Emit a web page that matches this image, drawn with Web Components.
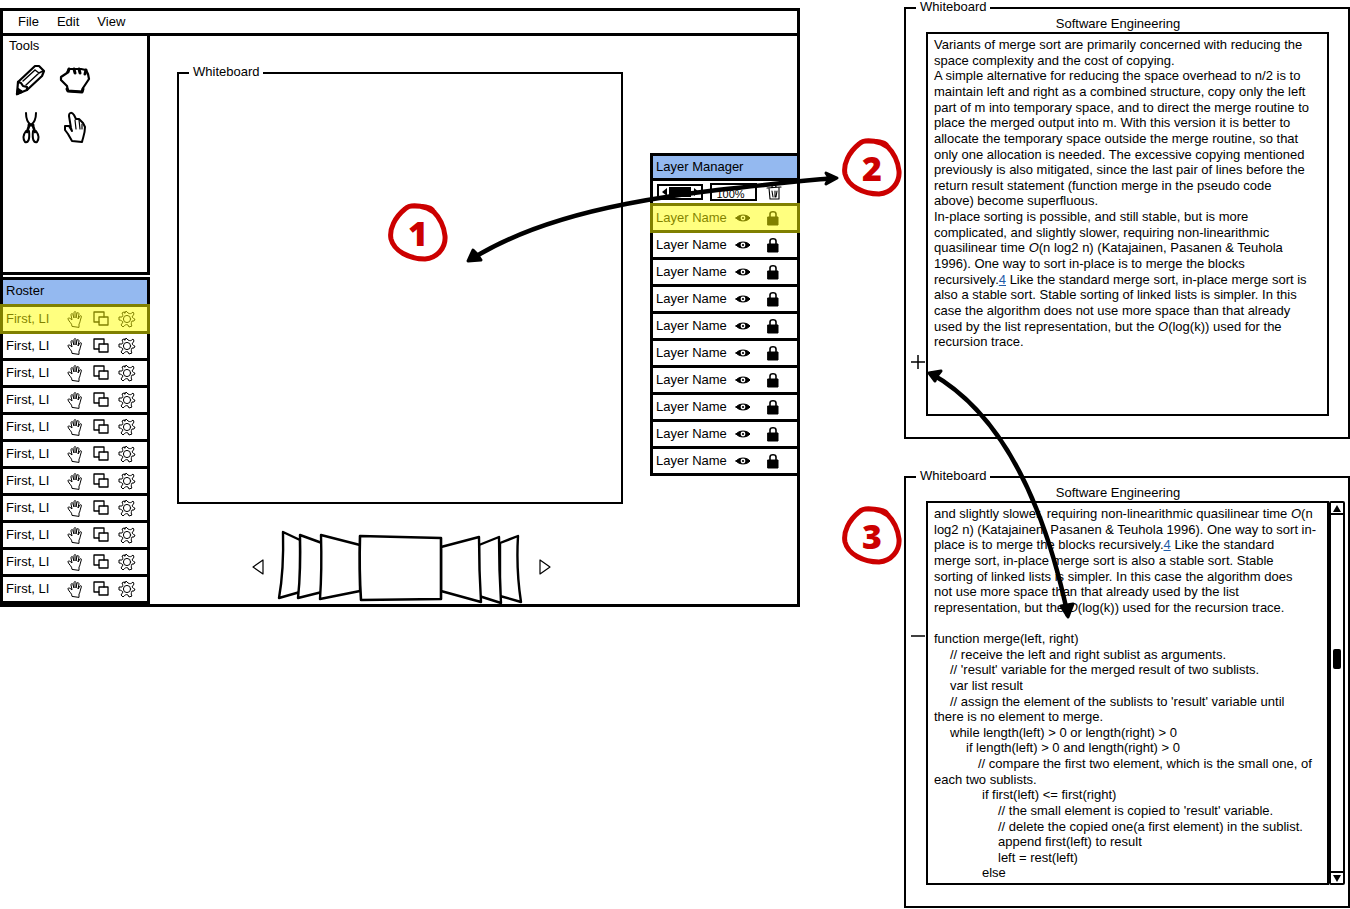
<!DOCTYPE html>
<html lang="en">
<head>
<meta charset="utf-8">
<title>Whiteboard wireframe</title>
<style>
  body { margin: 0; background: #fff; color: #000; font: 13px/16px "Liberation Sans", sans-serif; }
  a { color: #1f5ba8; }
</style>
</head>
<body>
<wire-page>
  <app-window slot="app"></app-window>
  <white-board slot="boards">
    <board-document>
      <text-lines rows="20">
        <span>Variants of merge sort are primarily concerned with reducing the</span>
        <span>space complexity and the cost of copying.</span>
        <span>A simple alternative for reducing the space overhead to n/2 is to</span>
        <span>maintain left and right as a combined structure, copy only the left</span>
        <span>part of m into temporary space, and to direct the merge routine to</span>
        <span>place the merged output into m. With this version it is better to</span>
        <span>allocate the temporary space outside the merge routine, so that</span>
        <span>only one allocation is needed. The excessive copying mentioned</span>
        <span>previously is also mitigated, since the last pair of lines before the</span>
        <span>return result statement (function merge in the pseudo code</span>
        <span>above) become superfluous.</span>
        <span>In-place sorting is possible, and still stable, but is more</span>
        <span>complicated, and slightly slower, requiring non-linearithmic</span>
        <span>quasilinear time <i>O</i>(n log2 n) (Katajainen, Pasanen &amp; Teuhola</span>
        <span>1996). One way to sort in-place is to merge the blocks</span>
        <span>recursively.<a href="#note-4">4</a> Like the standard merge sort, in-place merge sort is</span>
        <span>also a stable sort. Stable sorting of linked lists is simpler. In this</span>
        <span>case the algorithm does not use more space than that already</span>
        <span>used by the list representation, but the <i>O</i>(log(k)) used for the</span>
        <span>recursion trace.</span>
      </text-lines>
    </board-document>
  </white-board>
  <white-board slot="boards">
    <board-document expanded>
      <text-lines rows="24">
        <span>and slightly slower, requiring non-linearithmic quasilinear time <i>O</i>(n</span>
        <span>log2 n) (Katajainen, Pasanen &amp; Teuhola 1996). One way to sort in-</span>
        <span>place is to merge the blocks recursively.<a href="#note-4">4</a> Like the standard</span>
        <span>merge sort, in-place merge sort is also a stable sort. Stable</span>
        <span>sorting of linked lists is simpler. In this case the algorithm does</span>
        <span>not use more space than that already used by the list</span>
        <span>representation, but the <i>O</i>(log(k)) used for the recursion trace.</span>
        <span></span>
        <span>function merge(left, right)</span>
        <span class="in1">// receive the left and right sublist as arguments.</span>
        <span class="in1">// 'result' variable for the merged result of two sublists.</span>
        <span class="in1">var list result</span>
        <span class="in1">// assign the element of the sublists to 'result' variable until</span>
        <span>there is no element to merge.</span>
        <span class="in1">while length(left) &gt; 0 or length(right) &gt; 0</span>
        <span class="in2">if length(left) &gt; 0 and length(right) &gt; 0</span>
        <span class="in3">// compare the first two element, which is the small one, of</span>
        <span>each two sublists.</span>
        <span class="in4">if first(left) &lt;= first(right)</span>
        <span class="in5">// the small element is copied to 'result' variable.</span>
        <span class="in5">// delete the copied one(a first element) in the sublist.</span>
        <span class="in5">append first(left) to result</span>
        <span class="in5">left = rest(left)</span>
        <span class="in4">else</span>
      </text-lines>
    </board-document>
  </white-board>
</wire-page>

<script>
const S = (w, h, body, sw = 2) =>
  `<svg width="${w}" height="${h}" viewBox="0 0 ${w} ${h}" fill="none" stroke="currentColor" stroke-width="${sw}" stroke-linejoin="round" stroke-linecap="round" aria-hidden="true">${body}</svg>`;

const ICONS = {
  pencil: S(30, 32, '<path d="M1 30L2 18L19 2L23 2L28 7L26 12L11 26Z"/><path d="M2 18L5 19L7 22L11 23L11 26M1 30L5 27"/><path d="M7 17L19 6M10 21L23 9M19 6L23 9L27 7" stroke-width="1.4"/><path d="M1 30L2 25L6 28Z" fill="currentColor"/>', 2.2),
  grab: S(32, 30, '<path d="M2 12L8 8L10 4L22 4L27 5L29 9L30 14L24 23L23 27L9 26L8 21L2 15Z"/><path d="M10 4L9 7M15 4L16 8M20 4L21 8M27 5L26 9" stroke-width="3"/><path d="M8 24L9 26L23 27L24 24" stroke-width="3"/>', 2.2),
  scissors: S(20, 32, '<path d="M5 1C5 8 7 11 10 13C14 10 15 6 15 1" stroke-width="2"/><path d="M8 13L12 13" stroke-width="3"/><path d="M5 19C2 23 2 27 4 30C7 31 9 28 8 19ZM15 19C18 23 18 27 16 30C13 31 11 28 12 19Z"/><path d="M8 14L6 20M12 14L14 20" stroke-width="2.6"/>', 2),
  point: S(24, 34, '<path d="M8 17L6 5C6 1 9 1 11 4L13 8L16 8L20 12L22 16C22 23 20 26 19 31L9 30L5 23L2 19L2 15L6 15L9 20Z"/><path d="M12 9L13 18M16 9L17 18M19 13L19 18" stroke-width="1.2"/>', 2),
  hand: S(16, 18, '<path d="M5 16C5 13 2 12 1 9C1 7 3 8 5 10L4 5C4 3 6 3 6 5L7 8L7 3C7 1 9 1 9 3L9 8L10 3C11 2 12 3 12 4L11 9L13 6C14 5 15 6 14 8C13 11 13 13 12 14L12 17Z"/>', 1),
  copy: S(16, 16, '<path d="M6 11H1V1H11V6"/><path d="M6 6H15V14H6Z"/>', 1.3),
  gear: S(18, 18, '<circle cx="9" cy="9" r="3.6"/><path d="M7 3L8 1L10 3C12 4 13 4 15 2L16 4L14 7C15 8 16 9 17 9L16 11L14 11C13 13 13 15 14 16L11 17L10 15C8 14 7 15 5 17L3 15L5 12C4 11 3 10 1 10L1 7L4 7C5 6 5 5 4 3L6 2Z"/>', 1),
  eye: S(16, 10, '<path d="M1 5C4 1 12 1 15 5C12 9 4 9 1 5Z" fill="currentColor"/><circle cx="8" cy="5" r="2.4" fill="#fff" stroke="none"/><circle cx="8" cy="5" r="1.1" fill="currentColor" stroke="none"/>', 1),
  lock: S(12, 16, '<path d="M3 8V4C3 1 9 1 9 4V8" stroke-width="1.6"/><path d="M1 7H11V15H1Z" fill="currentColor"/>', 1),
  trash: S(16, 18, '<path d="M1 5L15 4M6 4C6 1 10 1 10 4M3 5L4 16H13L13 5M6 8L7 14M9 8V14M11 8L10 14"/>', 1.1),
  prev: S(14, 16, '<path d="M13 1V15L3 8Z"/>', 1.2),
  next: S(14, 16, '<path d="M4 1V15L14 8Z"/>', 1.2)
};

function define(name, html, setup) {
  const template = document.createElement('template');
  template.innerHTML = html;
  customElements.define(name, class extends HTMLElement {
    constructor() {
      super();
      this.attachShadow({ mode: 'open' }).append(template.content.cloneNode(true));
    }
    connectedCallback() { if (setup) setup(this, this.shadowRoot); }
  });
}

const BUTTON = 'button{all:unset;box-sizing:border-box;display:flex;align-items:center;justify-content:center;cursor:pointer}button:focus-visible{outline:1px solid #36c}svg{display:block;overflow:visible}';

define('wire-icon', '<style>:host{display:block}svg{display:block;overflow:visible}</style><div></div>',
  (el, root) => { root.querySelector('div').innerHTML = ICONS[el.getAttribute('name')]; });

define('menu-bar', `<style>${BUTTON}
  :host{display:block;border-bottom:3px solid #000}
  nav{display:flex;gap:18px;padding:0 15px;height:22px}</style>
  <nav><button>File</button><button>Edit</button><button>View</button></nav>`);

define('tool-box', `<style>${BUTTON}
  :host{display:block;box-sizing:border-box;min-height:239px;padding:0 6px;border-bottom:3px solid #000;border-right:3px solid #000}
  h2{margin:0;font:inherit;line-height:20px}
  div{display:grid;grid-template-columns:44px 44px;grid-auto-rows:48px}</style>
  <h2>Tools</h2>
  <div>
    <button aria-label="Pencil"><wire-icon name="pencil"></wire-icon></button>
    <button aria-label="Grab"><wire-icon name="grab"></wire-icon></button>
    <button aria-label="Cut"><wire-icon name="scissors"></wire-icon></button>
    <button aria-label="Point"><wire-icon name="point"></wire-icon></button>
  </div>`);

define('panel-head', `<style>
  :host{display:block;background:#94b9f0;border-top:3px solid #000;border-bottom:3px solid #000;padding:0 3px;line-height:22px}</style><slot></slot>`);

define('list-row', `<style>
  :host{display:flex;align-items:center;height:24px;padding-left:3px;border-bottom:3px solid #000;position:relative}
  .label{flex:1;white-space:nowrap}
  :host([selected])::after{content:"";position:absolute;inset:-3px -3px -3px -3px;background:rgba(255,255,0,.5)}</style>
  <span class="label"><slot></slot></span><slot name="actions"></slot>`);

define('roster-list', `<style>${BUTTON}
  :host{display:block;border-right:3px solid #000}
  panel-head{padding-bottom:2px}
  button{width:26px;height:24px}
  button:last-of-type{margin-right:7px}</style>
  <panel-head>Roster</panel-head><div></div>`,
  (el, root) => {
    const row = i => `<list-row${i ? '' : ' selected'}>First, LI
      <button slot="actions" aria-label="Raise hand"><wire-icon name="hand"></wire-icon></button>
      <button slot="actions" aria-label="Copy"><wire-icon name="copy"></wire-icon></button>
      <button slot="actions" aria-label="Settings"><wire-icon name="gear"></wire-icon></button></list-row>`;
    root.querySelector('div').innerHTML = Array.from({ length: 11 }, (_, i) => row(i)).join('');
  });

define('layer-manager', `<style>${BUTTON}
  :host{display:block;border-left:3px solid #000}
  list-row button{width:30px;height:24px}
  list-row button:last-of-type{margin-right:9px}
  .bar{display:flex;align-items:center;gap:7px;height:22px;padding-left:4px;border-bottom:3px solid #000}
  .slider{display:flex;box-sizing:border-box;width:46px;height:16px;border:2px solid #000}
  .slider button{width:10px}
  .slider i{flex:1;margin:1px 0;background:#000}
  input{box-sizing:border-box;width:47px;height:18px;margin:0;padding:3px 6px 0 0;border:2px solid #000;background:#fff;color:#000;font:11px/11px "Liberation Sans",sans-serif;text-align:center}
  .bin{margin-left:2px}</style>
  <panel-head>Layer Manager</panel-head>
  <div class="bar">
    <span class="slider"><button aria-label="Less"><svg width="5" height="8"><path d="M5 0V8L0 4Z"/></svg></button><i></i><button aria-label="More"><svg width="5" height="8"><path d="M0 0V8L5 4Z"/></svg></button></span>
    <input value="100%" aria-label="Zoom">
    <button class="bin" aria-label="Delete layer"><wire-icon name="trash"></wire-icon></button>
  </div>
  <div class="rows"></div>`,
  (el, root) => {
    const row = i => `<list-row${i ? '' : ' selected'}>Layer Name
      <button slot="actions" aria-label="Visibility"><wire-icon name="eye"></wire-icon></button>
      <button slot="actions" aria-label="Lock"><wire-icon name="lock"></wire-icon></button></list-row>`;
    root.querySelector('.rows').innerHTML = Array.from({ length: 10 }, (_, i) => row(i)).join('');
  });

define('white-board', `<style>
  :host{display:block}
  fieldset{box-sizing:border-box;min-width:0;min-height:439px;margin:0;padding:0;border:2px solid #000}
  legend{margin-left:10px;padding:0 4px 2px;line-height:14px}</style>
  <fieldset><legend>Whiteboard</legend><slot></slot></fieldset>`);

define('page-carousel', `<style>${BUTTON}
  :host{display:flex;justify-content:center;align-items:center;gap:12px}
  button{width:14px;height:16px}</style>
  <button aria-label="Previous"><wire-icon name="prev"></wire-icon></button>
  <svg width="248" height="74" viewBox="276 530 248 74" fill="#fff" stroke="#000" stroke-width="2.4" stroke-linejoin="round">
    <path d="M283 532L300 540V592L279 598Q284 570 283 532Z"/>
    <path d="M300 535L322 543V592L298 598Q301 570 300 535Z"/>
    <path d="M321 535L360 545V591L320 599Q322 570 321 535Z"/>
    <path d="M518 536L500 543V596L521 602Q516 570 518 536Z"/>
    <path d="M499 537L479 545V596L501 603Q499 570 499 537Z"/>
    <path d="M479 537L441 547V591L481 602Q479 570 479 537Z"/>
    <path d="M360 536L441 538V599L361 600Q359 570 360 536Z" stroke-width="2.6"/>
  </svg>
  <button aria-label="Next"><wire-icon name="next"></wire-icon></button>`);

define('app-window', `<style>
  :host{display:block;border:3px solid #000;margin-top:8px}
  .work{display:grid;grid-template-columns:147px minmax(0,1fr) 147px;align-items:start}
  .side{display:grid;gap:2px}
  .stage{align-self:stretch;display:flex;flex-direction:column;justify-content:space-between;padding:29px 27px 0}
  layer-manager{margin-top:117px}</style>
  <menu-bar></menu-bar>
  <div class="work">
    <div class="side"><tool-box></tool-box><roster-list></roster-list></div>
    <div class="stage"><white-board></white-board><page-carousel></page-carousel></div>
    <layer-manager></layer-manager>
  </div>`);

define('text-lines', `<style>
  :host{display:grid;grid-auto-rows:1fr;min-height:313px;line-height:15px;white-space:nowrap}
  :host([rows="24"]){min-height:375px}
  ::slotted(.in1){padding-left:16px}
  ::slotted(.in2){padding-left:32px}
  ::slotted(.in3){padding-left:44px}
  ::slotted(.in4){padding-left:48px}
  ::slotted(.in5){padding-left:64px}</style><slot></slot>`);

define('scroll-bar', `<style>${BUTTON}
  :host{display:flex;flex-direction:column;box-sizing:border-box;width:16px;border:2px solid #000;border-radius:2px}
  button{height:10px}
  .track{flex:1;border:solid #000;border-width:2px 0}
  .thumb{width:8px;height:20px;margin:134px auto 0;background:#000;border-radius:2px}</style>
  <button aria-label="Scroll up"><svg width="8" height="7"><path d="M0 7H8L4 0Z"/></svg></button>
  <div class="track"><div class="thumb"></div></div>
  <button aria-label="Scroll down"><svg width="8" height="7"><path d="M0 0H8L4 7Z"/></svg></button>`);

define('board-document', `<style>${BUTTON}
  :host{display:grid;grid-template-columns:20px minmax(0,1fr) 19px;padding-bottom:21px}
  h2{grid-column:1/-1;margin:0;padding-right:18px;font:inherit;line-height:16px;text-align:center}
  .toggle{align-self:start;width:16px;height:16px;margin:322px 0 0 4px}
  .page{box-sizing:border-box;min-height:384px;border:2px solid #000;padding:3px 6px 2px}
  scroll-bar{display:none}
  :host([expanded]) scroll-bar{display:flex}
  :host([expanded]) .toggle{margin-top:127px}
  :host([expanded]) .v{display:none}</style>
  <h2>Software Engineering</h2>
  <button class="toggle" aria-label="Toggle section"><svg width="14" height="14" stroke="#000" stroke-width="1.5"><path d="M0 7H14"/><path class="v" d="M7 0V14"/></svg></button>
  <div class="page"><slot></slot></div>
  <scroll-bar></scroll-bar>`);

define('step-badge', `<style>
  :host{position:absolute;width:62px;height:62px;color:#c00}
  svg{position:absolute;inset:0}
  span{display:block;text-align:center;font:800 34px/62px "Open Sans","Liberation Sans",sans-serif}</style>
  <svg width="62" height="62" fill="none" stroke="currentColor" stroke-width="5" stroke-linecap="round"><path d="M40 6C30 3 22 3 18 7C8 15 2 27 4 37C7 49 22 57 38 57C50 56 59 46 58 34C57 24 52 15 46 9C44 4 33 4 28 4M40 6L47 10"/></svg>
  <span><slot></slot></span>`);

define('flow-arrows', `<style>
  :host{position:absolute;left:0;top:0;pointer-events:none}
  svg{display:block}</style>
  <svg width="1350" height="909" fill="none" stroke="#000" stroke-width="4.5" stroke-linejoin="round">
    <path d="M470 260C560 203 690 192 834 178"/>
    <path d="M930 373Q1028 427 1068 616"/>
    <g fill="#000" stroke-width="3">
      <path d="M468 261L473 250L477 254L481 260Z"/>
      <path d="M837 178L826 173L829 178L826 184Z"/>
      <path d="M929 373L941 371L937 376L935 381Z"/>
      <path d="M1068 617L1061 606L1067 605L1073 604Z"/>
    </g>
  </svg>`);

define('wire-page', `<style>
  :host{display:grid;grid-template-columns:minmax(0,800fr) 104px minmax(0,446fr);align-items:start;position:relative}
  .boards{grid-column:3;display:grid;gap:30px}
  .one{left:387px;top:202px}
  .two{left:841px;top:137px}
  .three{left:841px;top:505px}</style>
  <slot name="app"></slot>
  <div class="boards"><slot name="boards"></slot></div>
  <flow-arrows></flow-arrows>
  <step-badge class="one">1</step-badge>
  <step-badge class="two">2</step-badge>
  <step-badge class="three">3</step-badge>`);
</script>
</body>
</html>
